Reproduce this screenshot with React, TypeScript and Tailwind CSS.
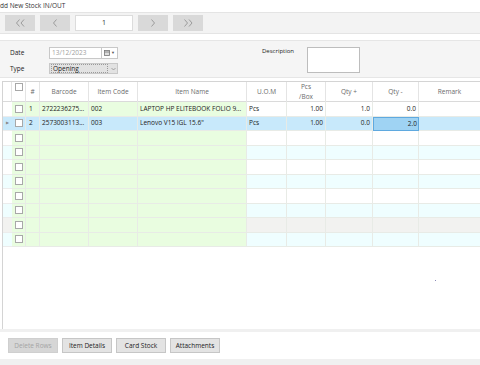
import React from "react";

const cols = "grid-cols-[9px_14px_14px_49px_49px_109px_40px_39px_47px_46px_1fr]";

type Row = {
  n?: string;
  barcode?: string;
  code?: string;
  name?: string;
  uom?: string;
  pcs?: string;
  qin?: string;
  qout?: string;
};

const rows: Row[] = [
  { n: "1", barcode: "2722236275...", code: "002", name: "LAPTOP HP ELITEBOOK FOLIO 9...", uom: "Pcs", pcs: "1.00", qin: "1.0", qout: "0.0" },
  { n: "2", barcode: "2573003113...", code: "003", name: "Lenovo V15 IGL 15.6\"", uom: "Pcs", pcs: "1.00", qin: "0.0", qout: "2.0" },
  {}, {}, {}, {}, {}, {}, {}, {},
];

function Check() {
  return <div className="h-[8px] w-[8px] border border-[#a8a8a8] bg-white" />;
}

// chevron glyphs for the record navigator
function Chev({ dir, count }: { dir: "l" | "r"; count: 1 | 2 }) {
  const one = (x: number) =>
    dir === "l" ? `M${x + 3} 0.5 L${x} 4 L${x + 3} 7.5` : `M${x} 0.5 L${x + 3} 4 L${x} 7.5`;
  return (
    <svg width={count === 2 ? 9 : 4} height="8" viewBox={count === 2 ? "0 0 9 8" : "0 0 4 8"}>
      <path d={count === 2 ? `${one(0.5)} ${one(5)}` : one(0.5)} fill="none" stroke="#8c8c8c" strokeWidth="0.8" />
    </svg>
  );
}

function NavBtn({ children }: { children: React.ReactNode }) {
  return <div className="flex h-[16px] w-[30px] items-center justify-center bg-[#d9d9d9]">{children}</div>;
}

function Btn({ label, disabled }: { label: string; disabled?: boolean }) {
  return (
    <div
      className={
        disabled
          ? "flex h-[15px] w-[50px] items-center justify-center border border-[#cfcfcf] bg-[#d6d6d6] text-[#a4a4a4]"
          : "flex h-[15px] w-[50px] items-center justify-center border border-[#c6c6c6] bg-[#e3e3e3] text-[#222]"
      }
    >
      {label}
    </div>
  );
}

export default function App() {
  return (
    <div
      className="flex h-[365px] w-[480px] flex-col overflow-hidden bg-white text-[6.5px] text-[#222]"
      style={{ fontFamily: "'Open Sans', 'Noto Sans', sans-serif" }}
    >
      {/* title */}
      <div className="flex h-[12px] items-center text-[#333]">dd New Stock IN/OUT</div>

      {/* navigator */}
      <div className="flex h-[22px] items-center gap-[5px] border-y border-[#e4e4e4] bg-[#f3f3f3] pl-[5px]">
        <NavBtn><Chev dir="l" count={2} /></NavBtn>
        <NavBtn><Chev dir="l" count={1} /></NavBtn>
        <div className="flex h-[16px] w-[58px] items-center justify-center border border-[#dcdcdc] bg-white text-[7px] text-[#333]">1</div>
        <NavBtn><Chev dir="r" count={1} /></NavBtn>
        <NavBtn><Chev dir="r" count={2} /></NavBtn>
      </div>

      <div className="h-[6px]" />

      {/* form */}
      <div className="flex h-[38px] border-y border-[#e6e6e6] bg-[#f5f5f5] pl-[10px]">
        <div className="flex w-[252px] flex-col gap-[4px] pt-[6px]">
          <div className="flex h-[12px] items-center">
            <span className="w-[39px]">Date</span>
            <div className="flex h-[12px] w-[53px] items-center border border-[#c8c8c8] bg-white pl-[2px] text-[#a0a0a0]">13/12/2023</div>
            <div className="flex h-[12px] w-[16px] items-center justify-center gap-[1px] border border-l-0 border-[#c8c8c8] bg-white">
              <svg width="6" height="6" viewBox="0 0 6 6">
                <rect x="0.5" y="0.5" width="5" height="5" fill="#ddd" stroke="#777" strokeWidth="0.8" />
                <line x1="0.5" y1="2" x2="5.5" y2="2" stroke="#777" strokeWidth="0.8" />
              </svg>
              <span className="text-[4px] text-[#555]">▼</span>
            </div>
          </div>
          <div className="flex h-[11px] items-center">
            <span className="w-[39px]">Type</span>
            <div className="flex h-[11px] w-[69px] items-center border border-[#c8c8c8] bg-[#e2e2e2]">
              <div className="mx-[1px] flex h-[9px] w-[57px] items-center border border-dotted border-[#999] pl-[1px]">Opening</div>
              <svg className="ml-[2px]" width="5" height="4" viewBox="0 0 5 4">
                <path d="M0.5 1 L2.5 3 L4.5 1" fill="none" stroke="#888" strokeWidth="0.7" />
              </svg>
            </div>
          </div>
        </div>
        <div className="flex items-start pt-[6px]">
          <span className="w-[45px] text-[6px]">Description</span>
          <div className="h-[26px] w-[53px] border border-[#bdbdbd] bg-white" />
        </div>
      </div>

      <div className="h-[3px]" />

      {/* grid */}
      <div className="relative ml-[2px] flex h-[248px] flex-col border-l border-t border-[#d4d4d4]">
        <div className={`grid h-[20px] ${cols} border-b border-[#dadada] text-[6.5px] text-[#6a6a6a]`}>
          <div className="border-r border-[#e4e4e4]" />
          <div className="flex items-start justify-center border-r border-[#e4e4e4] pt-[1px]"><Check /></div>
          <div className="flex items-center justify-center border-r border-[#e4e4e4]">#</div>
          <div className="flex items-center justify-center border-r border-[#e4e4e4]">Barcode</div>
          <div className="flex items-center justify-center border-r border-[#e4e4e4]">Item Code</div>
          <div className="flex items-center justify-center border-r border-[#e4e4e4]">Item Name</div>
          <div className="flex items-center justify-center border-r border-[#e4e4e4]">U.O.M</div>
          <div className="flex flex-col items-center justify-center border-r border-[#e4e4e4] leading-[10px]">
            <span>Pcs</span>
            <span>/Box</span>
          </div>
          <div className="flex items-center justify-center border-r border-[#e4e4e4]">Qty +</div>
          <div className="flex items-center justify-center border-r border-[#e4e4e4]">Qty -</div>
          <div className="flex items-center justify-center">Remark</div>
        </div>

        {rows.map((r, i) => {
          const sel = i === 1;
          const base = sel ? "bg-[#c8e9fb]" : i === 8 ? "bg-[#f2f2f0]" : i % 2 === 0 ? "bg-white" : "bg-[#effeff]";
          const green = sel ? "bg-[#c8e9fb]" : "bg-[#e9fde0]";
          const line = "border-r border-b border-[#e8ebe6]";
          return (
            <div key={i} className={`grid h-[14.5px] ${cols} whitespace-nowrap`}>
              <div className={`flex items-center justify-center ${base} border-b border-[#ececec] text-[4px] text-[#888]`}>
                {sel ? "▶" : ""}
              </div>
              <div className={`flex items-center justify-center ${green} ${line}`}><Check /></div>
              <div className={`flex items-center pl-[3px] ${green} ${line}`}>{r.n}</div>
              <div className={`flex items-center overflow-hidden pl-[2px] ${green} ${line}`}>{r.barcode}</div>
              <div className={`flex items-center pl-[2px] ${green} ${line}`}>{r.code}</div>
              <div className={`flex items-center overflow-hidden pl-[2px] ${green} ${line}`}>{r.name}</div>
              <div className={`flex items-center pl-[2px] ${base} ${line}`}>{r.uom}</div>
              <div className={`flex items-center justify-end pr-[2px] ${base} ${line}`}>{r.pcs}</div>
              <div className={`flex items-center justify-end pr-[2px] ${base} ${line}`}>{r.qin}</div>
              {sel ? (
                <div className="flex items-center justify-end border border-[#5fa9df] bg-[#9fd3f3] pr-[1px]">{r.qout}</div>
              ) : (
                <div className={`flex items-center justify-end pr-[2px] ${base} ${line}`}>{r.qout}</div>
              )}
              <div className={`${base} border-b border-[#e8ebe6]`} />
            </div>
          );
        })}
        <div className="absolute left-[432px] top-[198px] h-[1px] w-[1px] bg-[#8a8ab8]" />
      </div>

      {/* bottom bar */}
      <div className="h-[3px] bg-[#f0f0f0]" />
      <div className="flex h-[27px] items-center gap-[4px] bg-white pl-[8px]">
        <Btn label="Delete Rows" disabled />
        <Btn label="Item Details" />
        <Btn label="Card Stock" />
        <Btn label="Attachments" />
      </div>
      <div className="flex-1 bg-[#f0f0f0]" />
    </div>
  );
}
